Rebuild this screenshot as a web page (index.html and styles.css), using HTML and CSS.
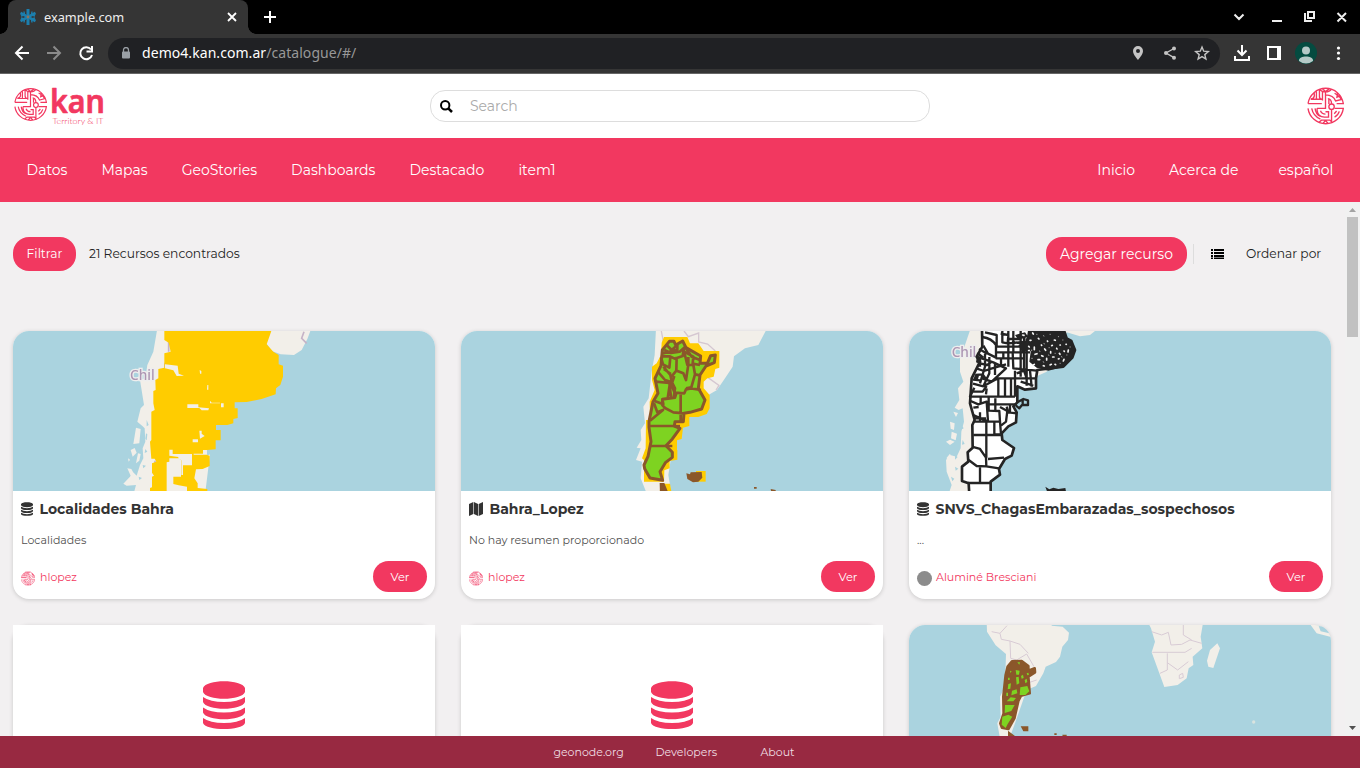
FILE: index.html
```html
<!DOCTYPE html>
<html lang="es">
<head>
<meta charset="utf-8">
<title>example.com</title>
<link rel="stylesheet" href="styles.css">
</head>
<body>
<svg class="defs" width="0" height="0">
  <symbol id="globe" viewBox="982 263 110 112">
    <g fill="none" stroke="currentColor" stroke-width="4">
      <path d="M985 312A53 53 0 0 1 1090 312H1070M985 326A53 53 0 0 0 1090 326H1064M985 312H1026M993 299H1026M994 298Q1003 297 1004 288L1003 281M1010 276V300M1019 269V291Q1019 299 1026 299M1028 276V303M1019 268Q1024 277 1037 277T1055 268M1028 268L1037 276 1048 268M1037 277V320M1037 286Q1061 287 1067 304L1087 299M1044 297Q1055 298 1055 313M1064 281Q1080 290 1083 299M1073 279L1071 293 1081 289M985 312H1025M1012 326H1037V320M1012 326V332Q1014 351 1034 352H1046V336H1037M1022 333Q1026 343 1037 343M996 326Q1000 348 1022 358M1006 326Q1008 344 1022 350M1055 328V370M1047 298V313M1064 352Q1075 346 1078 335M1063 342L1070 334M1017 368L1025 361H1050L1058 369M1030 370L1037 362 1044 370"/>
      <circle cx="1055" cy="321" r="8"/>
    </g>
  </symbol>
  <symbol id="database" viewBox="0 0 42 48">
    <path fill="currentColor" d="M0 7C3-2 39-2 42 7V11C39 20 3 20 0 11ZM0 16Q7 21 21 21T42 16V21C39 30 3 30 0 21ZM0 26.500Q7 31.500 21 31.500T42 26.500V31.500C39 40.500 3 40.500 0 31.500ZM0 37Q7 42 21 42T42 37V42C39 50 3 50 0 42Z"/>
  </symbol>
</svg>

<div class="tabstrip">
  <div class="tab">
    <svg class="favicon" viewBox="0 0 16 16"><g stroke="#1c7fae" fill="none"><path stroke-width="3" d="M8 0V16"/><path stroke-width="2.600" d="M.5 4L15.500 12M.5 12L15.500 4"/><path d="M4 2.500L4.500 6 1 7M12 2.500L11.500 6 15 7M4 13.500L4.500 10 1 9M12 13.500L11.500 10 15 9" stroke-width="1.400"/></g><circle cx="8" cy="8" r="1.400" fill="#8b745c"/></svg>
    <span class="tab-title">example.com</span>
    <svg class="tab-close" viewBox="0 0 10 10"><path d="M1 1L9 9M9 1L1 9" stroke="#fff" stroke-width="1.800"/></svg>
  </div>
  <svg class="new-tab" viewBox="0 0 12 12"><path d="M6 0V12M0 6H12" stroke="#fff" stroke-width="2"/></svg>
  <svg class="window-icons" viewBox="0 0 120 16"><g fill="none" stroke="#eee" stroke-width="2"><path d="M4.500 5.500L9 10 13.500 5.500M42 12H52M75 4V12H82M78 3H84V9H78ZM107.500 4L116 12.500M116 4L107.500 12.500"/></g></svg>
</div>

<div class="toolbar">
  <svg class="nav-icons" viewBox="0 0 94 20"><g fill="none" stroke-width="2"><path stroke="#fff" d="M29 10H16M22.500 3.500L16 10 22.500 16.500"/><path stroke="#8b8b8b" d="M47 10H60M53.500 3.500L60 10 53.500 16.500"/><path stroke="#fff" d="M91 6.500A6 6 0 1 0 92 12M92 3V8.500H86.500"/></g></svg>
  <div class="omnibox">
    <svg class="lock" viewBox="0 0 10 12"><path fill="#9aa0a6" d="M1 4.500H8Q9 4.500 9 5.500V10.500Q9 11.500 8 11.500H2Q1 11.500 1 10.500V5.500Q1 4.500 2 4.500Z"/><path fill="none" stroke="#9aa0a6" stroke-width="1.300" d="M2.500 5V3A2.500 2.500 0 0 1 7.500 3V5"/></svg>
    <span class="url">demo4.kan.com.ar<span class="url-path">/catalogue/#/</span></span>
    <svg class="omni-icons" viewBox="0 0 80 16"><path fill="#c4c4c4" fill-rule="evenodd" d="M7 1A5 5 0 0 1 12 6C12 9.500 7 15 7 15S2 9.500 2 6A5 5 0 0 1 7 1ZM7 4A2 2 0 1 0 7 8 2 2 0 1 0 7 4Z"/><g fill="#c4c4c4"><circle cx="35" cy="8" r="2"/><circle cx="43" cy="3.500" r="2"/><circle cx="43" cy="12.700" r="2"/></g><path fill="none" stroke="#c4c4c4" stroke-width="1.400" d="M43 3.500L35 8 43 12.700M71 2L72.700 6.200 77.300 6.600 73.800 9.600 74.900 14 71 11.600 67.100 14 68.200 9.600 64.700 6.600 69.300 6.200Z"/></svg>
  </div>
  <svg class="browser-icons" viewBox="0 0 120 24"><g fill="none" stroke="#fff" stroke-width="2"><path d="M20 4V14M15.500 9.500L20 14 24.500 9.500M13 15V19H27V15"/><path d="M46 6H58V18H46Z"/><path stroke-width="4" d="M57 6V18"/></g><circle cx="84" cy="12" r="11" fill="#044b40"/><circle cx="84" cy="9.500" r="4" fill="#b5c9c7"/><path fill="#b5c9c7" d="M77 20C76 14 92 14 91 20Q84 25 77 20"/><g fill="#fff"><circle cx="116.500" cy="7" r="1.600"/><circle cx="116.500" cy="12" r="1.600"/><circle cx="116.500" cy="17.500" r="1.600"/></g></svg>
</div>

<header class="brandbar">
  <svg class="logo" viewBox="0 0 92 40" role="img" aria-label="kan"><use href="#globe" x="0" y="1.500" width="33" height="34"/><text class="logo-name" x="36" y="27" textLength="55" lengthAdjust="spacingAndGlyphs">kan</text><text class="logo-tag" x="38.500" y="37.500" textLength="51" lengthAdjust="spacingAndGlyphs">Territory &amp; IT</text></svg>
  <div class="search">
    <svg class="search-icon" viewBox="0 0 13 13"><circle cx="5.200" cy="5.200" r="4.200" fill="none" stroke="#000" stroke-width="2"/><path d="M8.300 8.300L12 12" stroke="#000" stroke-width="2.500"/></svg>
    <span class="placeholder">Search</span>
  </div>
  <svg class="avatar-large"><use href="#globe"/></svg>
</header>

<nav class="menu">
  <div class="menu-left"><a>Datos</a><a>Mapas</a><a>GeoStories</a><a>Dashboards</a><a>Destacado</a><a>item1</a></div>
  <div class="menu-right"><a>Inicio</a><a>Acerca de</a><a>español</a></div>
</nav>

<main class="content">
  <section class="catalogue">
    <div class="filters">
      <span class="btn btn-filter">Filtrar</span>
      <span class="count">21 Recursos encontrados</span>
      <span class="btn btn-add">Agregar recurso</span>
      <span class="divider"></span>
      <svg class="list-icon" viewBox="0 0 13 10"><path d="M0 1H2M3 1H13M0 4H2M3 4H13M0 7H2M3 7H13M0 9.500H2M3 9.500H13" stroke="#000" stroke-width="1.800"/></svg>
      <span class="sort">Ordenar por</span>
    </div>

    <div class="grid">
      <article class="card">
        <svg class="thumb" viewBox="0 0 422 160"><g class="map" transform="translate(97 -6) scale(.33333)">
          <path fill="#f2efe9" d="M142 10H200L240 430 300 388 285 510H70L78 480 50 482 40 476 60 455 68 440 80 452 90 420 100 400 98 370 106 350 104 310 98 304 82 290 92 250 102 240 90 165 106 160 112 120 130 80ZM484 10H604L592 42 575 75 552 90 512 88 485 78 469 55ZM78 308L92 312 88 355 70 357ZM62 375l12-6 6 14-12 12ZM84 385l8 2-4 20-10 8ZM54 400l6 4-4 6ZM52 430l12 2 8 14-10 6Z"/>
          <path fill="#aad3df" d="M110 285l6 15-6 4ZM108 325l4 3-2 18-4-4ZM106 372l6 8-8 4ZM98 420l10 2-8 8ZM86 455l10 4-8 6Z"/>
          <path fill="none" stroke="#c5b3c7" stroke-width="5" d="M176 47V80M165 113V133M135 407V415M582 20L575 40 590 55"/>
          <text class="map-label" x="60" y="166">Chil</text>
          <path fill="#fc0" d="M163 10H484V18L478 35 470 58 490 80 506 90V118L519 122V155L511 180 498 190 497 208 455 222 410 231 374 232V250H383V279L370 282V295L352 300H318V315H332V346H317V373L291 375V390L299 392V423L278 432 258 433 253 460 263 475V489L292 492V510H231V485L206 481 190 477V455H213V405L205 400H178V410L170 412V510H120V489L126 487V455L132 452 126 443V415L139 410 134 401H124L120 350 124 345V260L134 255 130 235V198L137 195 136 165 145 160V132L163 128V85L182 80 176 53 163 45Z"/>
          <path fill="#f2efe9" d="M165 118L203 122 206 146 222 152 200 153 190 136 165 130ZM232 238H265V247L297 250 295 256H275L268 249H232ZM300 227L305 233H330V235H300ZM333 235H341V247H333ZM268 317H275V326L284 333 270 341ZM248 343H264V352H248ZM178 374H188V387H246V421H219V450H214V406L205 401V396L178 392ZM171 455H188V480L205 485 231 490V510H171ZM269 135l5 3v8h-4ZM292 180h3v14h-4ZM279 375h12v14h-40v-3h28Z"/>
        </g></svg>
        <div class="card-body">
          <h2 class="card-title"><svg class="title-icon"><use href="#database"/></svg><span>Localidades Bahra</span></h2>
          <p class="desc">Localidades</p>
          <div class="card-foot"><span class="user"><svg class="avatar"><use href="#globe"/></svg>hlopez</span><span class="btn btn-view">Ver</span></div>
        </div>
      </article>

      <article class="card">
        <svg class="thumb" viewBox="0 0 422 160"><g class="map" transform="translate(149 -6) scale(.33333)">
          <path fill="#f2efe9" d="M138 10H470L467 18 445 60 405 70 372 94 368 125 345 160 321 195 290 213 200 290 175 450 185 510H112L92 460 96 410 78 405 92 370 80 368 94 345 92 315 105 295 100 245 116 220 125 140 134 90Z"/>
          <path fill="none" stroke="#d5c7d1" stroke-width="4" d="M154 18L160 50M222 18L235 35 266 24V51L293 57 316 78M290 155L327 181L318 195"/>
          <path fill="#fc0" d="M162 36H232L240 55 265 55 281 78H328V128L316 132 311 155 292 160 281 170V190L299 210V250L290 267 265 276H238V303L219 308 215 342 201 346V375H202V404L179 408V430L163 436 162 470H102V405L96 400 107 370 108 285H120L119 230 134 195 126 165V125L140 115 153 90 155 53ZM151 476H180L186 510H149Z"/>
          <path fill="#7ed321" stroke="#8b572a" stroke-width="9" stroke-linejoin="round" d="M178 49H192L197 60 218 48 228 68 272 93 270 115 292 115 302 92 316 90 313 113 288 123 270 150 265 190 285 225 275 252 240 262 222 265 220 290H195L193 303 210 310 187 342 168 362 187 382V397L167 412 150 440 158 466 120 459 104 431 102 420 114 394 123 350 117 307V290L129 230 144 205 135 160 153 122 157 75Z"/>
          <path fill="none" stroke="#8b572a" stroke-width="8" stroke-linejoin="round" d="M170 60L185 75 202 60V74L183 79 159 85M157 94H180L194 101 218 93 222 68M228 70L245 95 270 105M222 80L250 95 248 116 270 120M153 97L159 118 178 128 181 96M200 95L199 137L185 154M200 137L220 145 228 165 235 119V96M222 78L232 120H250L255 148 270 151M255 148L244 187 228 190M160 125L181 150 186 172 165 165 146 143M137 170L178 174L183 216M186 172L195 190 191 220M180 174L173 220 157 222 160 238 134 228M193 153L184 180 194 203 223 205 228 193 243 190 273 195M212 204V290M158 223L195 218 199 205M157 222V240L165 249 190 262 223 265M132 235L142 262 159 255 120 287M117 303H210M121 363H187M161 132L183 147M163 75L183 84 209 80 225 66"/>
          <path fill="#fc0" d="M258 438H287V470H258Z"/><path fill="#8b572a" d="M229 445L240 448 242 442 275 441 277 458 265 470 249 472 232 462ZM149 474H163L178 510H150ZM432 486h8v5h-8ZM482 492l15 3v12h-12Z"/>
        </g></svg>
        <div class="card-body">
          <h2 class="card-title"><svg class="title-icon map-icon" viewBox="0 0 14 14"><path fill="currentColor" d="M0 2L4.300 0V12L0 14ZM4.900 0L9.100 2V14L4.900 12ZM9.700 2L14 0V12L9.700 14Z"/></svg><span>Bahra_Lopez</span></h2>
          <p class="desc">No hay resumen proporcionado</p>
          <div class="card-foot"><span class="user"><svg class="avatar"><use href="#globe"/></svg>hlopez</span><span class="btn btn-view">Ver</span></div>
        </div>
      </article>

      <article class="card">
        <svg class="thumb" viewBox="0 0 422 160"><g class="map" transform="translate(-9 -6) scale(.33333)">
          <path fill="#f2efe9" d="M212 10H590L585 18 570 30 540 34 500 22 440 140 330 190 250 510H145L155 480 140 440 138 405 150 390 170 395 182 370 184 320 192 290 188 250 176 255 164 248 178 225 174 190 190 170 180 140 180 100 195 60ZM150 290l14 5-2 20-10-4ZM155 320l16 6-4 20-14-6ZM138 350l12-6 14 6-14 10ZM160 260l14 4-6 12ZM140 398l10-12 8 20-16 4Z"/>
          <path fill="#aad3df" d="M165 390l8 6-8 8ZM185 300l6 10-8 4ZM153 455l10 6-6 8ZM165 425l10 6-8 6ZM188 345l6 12-8 2Z"/>
          <text class="map-label" x="155" y="96">Chil</text>
          <path fill="#fff" stroke="#242424" stroke-width="8" stroke-linejoin="round" d="M246 10H490L500 40 514 48 525 75 517 98 490 125 412 135 408 160V190L375 194 352 184V215L352 232 340 244 350 262 348 292 325 304 305 325 307 345 342 369 335 392 315 402 297 432 300 449 272 470V510H208L206 475 186 468V425L205 410 203 382 218 368 217 300 224 285 210 235 215 160 240 110 230 95 247 65Z"/>
          <path fill="none" stroke="#242424" stroke-width="7" stroke-linejoin="round" d="M247 36Q275 40 288 60V98L264 86 250 62M255 22L290 30V62M307 10V52L323 55 325 30 302 26M325 18V125M340 10V82M288 65H390M289 82H390M287 100H370M310 80V100M303 100V125M338 82L340 130 410 137M362 10V155M372 30V130M380 40V182M325 42H360M325 55L380 50M230 95L280 112 318 130 275 170 247 160M237 72L262 86M232 84L250 98M240 115L262 120 275 110M229 130L252 138 276 130 318 118M226 150L248 148 260 165M219 164L240 166M219 176L250 184 294 160H408M345 137V215M255 86V125L240 175M268 96V145L250 184M240 100V125M285 112V150M223 188L210 215H345M217 200H248L260 183M295 158V215M315 162V213M333 162V215M258 208L260 190M362 170L400 182M390 137L395 185M350 145L372 137 380 160M212 228L235 238 260 230 264 290 220 270M242 218V238M220 248L236 246M266 218V257L298 258 300 290H220M286 220V256M268 238H350M300 246L322 258 318 290 300 304M320 245L325 262 350 265M330 238V262M283 292V328H303M220 330H303M259 290V398M300 290L303 328M218 366L240 372 258 398 259 424 230 423 206 405M264 402L312 398M259 424L297 430M240 425V475M204 474H270M240 262V290M220 280H258M352 232l18-10 14 4v14h-18l-8 10-10-8M368 224v12"/>
          <path fill="#242424" d="M385 10H490L500 38 514 48 525 75 517 98 490 125 445 137 410 128 388 110 392 80 378 55ZM355 60l24-10 18 20-30 12ZM345 30l30-8 10 14-30 8ZM230 98l12 4-4 14-10-4ZM225 148l12 4-4 14-12-4Z"/>
          <path fill="none" stroke="#f4f4f4" stroke-width="5" stroke-linecap="round" d="M368 30l4 1M398 24l2 3M390 46h3M403 66v8M386 64l2 2M415 40l2 2M405 88l6-2M414 104h5M400 120l3-2M434 72l3 4M442 48l1 1M463 45l3 1M425 92l4 2M452 80v4M470 70l1 2M440 100v5M458 96h4M478 85l2 3M492 78l1 1M475 102l2-1M450 120l4-2M430 122l3 1M492 103l-2 5M505 75l-1 6M498 58h1M465 118l2 1M424 60l1 1M455 62l2-1M480 60h1"/>
          <path fill="none" stroke="#bbb" stroke-width="2.500" stroke-linecap="round" d="M410 28h1M430 32l2 1M450 28h1M475 35h1M432 55l1 2M447 68h1M418 78l2 1M445 90l2 1M465 85h1M484 95l2 1M500 90h1M430 110l1 2M480 115h1M510 66h1M488 45h1M395 75v2M395 100h2"/>
          <path fill="#242424" d="M436 485L448 493 460 488 475 492 496 489 500 510H445Z"/>
        </g></svg>
        <div class="card-body">
          <h2 class="card-title"><svg class="title-icon"><use href="#database"/></svg><span>SNVS_ChagasEmbarazadas_sospechosos</span></h2>
          <p class="desc">...</p>
          <div class="card-foot"><span class="user"><i class="gray-avatar"></i>Aluminé Bresciani</span><span class="btn btn-view">Ver</span></div>
        </div>
      </article>

      <article class="card square"><div class="placeholder-thumb"><svg class="big-database"><use href="#database"/></svg></div></article>
      <article class="card square"><div class="placeholder-thumb"><svg class="big-database"><use href="#database"/></svg></div></article>
      <article class="card">
        <svg class="thumb" viewBox="0 0 422 160"><g class="map" transform="translate(-9 -135) scale(.33333)">
          <path fill="#f2efe9" d="M260 395H455V407L488 410 507 428 504 450 487 470 480 500 468 516 437 530 430 550 408 588 380 600 345 700 330 740H299L292 700 302 680 300 620 315 590 318 492 287 466 261 425ZM743 395H908V405L902 440 907 475 878 500 880 525 866 535 860 565 833 585 793 591 778 550 755 487 765 455 753 415ZM952 460L960 475 940 534 925 530 921 512 930 480ZM1228 400L1260 406 1293 435V441L1250 430Z"/>
          <path fill="#aad3df" d="M1256 408L1278 412 1288 430 1262 424Z"/>
          <path fill="none" stroke="#d8cbd5" stroke-width="3" d="M275 425L300 430 321 407M300 430L304 448 330 453 332 505 350 510 380 492 402 530M330 453L360 463 385 490M380 580L410 570M755 425L785 435 805 427 813 465 845 463 870 450 905 460M757 487H855L875 475M802 490V540L780 550M802 518L833 540 865 515M850 405V435L875 450M838 555l10-5 2 12-12 4Z"/>
          <path fill="#8b572a" stroke="#8b572a" stroke-width="8" stroke-linejoin="round" d="M336 514L365 513 385 528V542L404 535 405 547 385 560 389 610 363 617 355 633 343 685 325 717 306 713 301 700 311 670 310 620 317 555 323 530Z"/>
          <path fill="#7ed321" d="M361 592L382 588 388 604 376 615H359ZM347 540l12 2-2 12h-8ZM348 562l8-2 2 20-8 4ZM325 582l8-2-2 16-8 2ZM336 602l14-4 2 12-18 6ZM320 634l12-12 16 2-8 10ZM315 645h29l-10 18-20 6ZM307 680l18-6 12 6-14 22-6 12-12-10ZM319 608h5v10h-5ZM363 558l6-4 2 10-6 2ZM380 550l5-2 2 6-5 2ZM330 542l5 2-4 5ZM352 517h8l-2 7ZM374 570l6-4 2 10-6 4ZM324 563h5v7h-5Z"/>
          <path fill="#8b572a" d="M362 709H385V724H370ZM324 722L345 738H324ZM463 730h7v5h-7ZM487 734h13v5h-12Z"/><circle cx="1061" cy="696" r="5" fill="#d9e3df"/>
        </g></svg>
      </article>
    </div>
  </section>
  <div class="scrollbar">
    <svg class="arrow" viewBox="0 0 15 15"><path d="M4 10L7.500 6 11 10Z" fill="#a3a3a3"/></svg>
    <div class="scroll-thumb"></div>
    <svg class="arrow" viewBox="0 0 15 15"><path d="M4 5H11L7.500 9Z" fill="#505050"/></svg>
  </div>
</main>

<footer class="footer"><a class="geonode">geonode.org</a><a class="developers">Developers</a><a>About</a></footer>
</body>
</html>
```
FILE: styles.css
```css
* { box-sizing: border-box; }
body { margin: 0; width: 1360px; height: 768px; overflow: hidden; display: flex; flex-direction: column; font-family: Montserrat, Inter, "Open Sans", sans-serif; background: #f2f0f1; color: #212121; }
svg { display: block; flex: none; }
.defs { position: absolute; }

.tabstrip { height: 34px; flex: none; background: #000; display: flex; align-items: center; padding-left: 8px; }
.tab { width: 240px; height: 34px; background: #353535; border-radius: 8px 8px 0 0; display: flex; align-items: center; padding: 0 11px 0 12px; position: relative; }
.tab::before, .tab::after { content: ""; position: absolute; bottom: 0; width: 8px; height: 8px; }
.tab::before { left: -8px; background: radial-gradient(circle at 0 0, #000 7.500px, #353535 8px); }
.tab::after { right: -8px; background: radial-gradient(circle at 100% 0, #000 7.500px, #353535 8px); }
.favicon { width: 16px; height: 16px; }
.tab-title { margin-left: 8px; flex: 1; font: 12.750px "Noto Sans", sans-serif; color: #eee; }
.tab-close { width: 10px; height: 10px; }
.new-tab { width: 12px; height: 12px; margin-left: 16px; }
.window-icons { width: 120px; height: 16px; margin-left: auto; margin-right: 10px; }
.toolbar { height: 40px; flex: none; background: #353535; border-bottom: 1px solid #666; display: flex; align-items: center; padding: 0 18px 1px 0; }
.nav-icons { width: 94px; height: 20px; }
.omnibox { width: 1112px; height: 31px; margin-left: 14px; background: #202124; border-radius: 16px; display: flex; align-items: center; padding: 0 9px 0 13px; }
.lock { width: 10px; height: 12px; }
.url { margin: 0 0 2px 11px; flex: 1; font: 14px "Noto Sans", sans-serif; letter-spacing: .06px; color: #fff; }
.url-path { color: #989898; }
.omni-icons { width: 80px; height: 16px; }
.browser-icons { width: 120px; height: 24px; margin-left: 2px; }

.brandbar { height: 64px; flex: none; background: #fff; display: flex; align-items: center; padding: 0 16px 0 14px; color: #f23860; }
.logo { width: 92px; height: 40px; overflow: visible; }
.logo-name { font: 600 33px "Noto Sans", sans-serif; fill: #f23860; stroke: #f23860; stroke-width: .7px; stroke-linejoin: round; }
.logo-tag { font: 300 8px Lato, sans-serif; fill: #f23860; }
.search { width: 500px; height: 32px; margin-left: 324px; border: 1px solid #ddd; border-radius: 15px; display: flex; align-items: center; padding-left: 9px; }
.search-icon { width: 13px; height: 13px; }
.placeholder { margin-left: 17px; font-size: 14px; color: #aaa; }
.avatar-large { width: 37px; height: 38px; margin-left: auto; }
.menu { height: 64px; flex: none; background: #f23860; color: #fff; display: flex; justify-content: space-between; align-items: center; padding: 0 26.600px 0 26.600px; font-size: 14px; }
.menu-left, .menu-right { display: flex; gap: 34px; }
.menu-right a:last-child { margin-left: 6px; }

.content { height: 534px; flex: none; display: flex; }
.catalogue { width: 1345px; overflow: hidden; padding: 35px 14px 0 13px; }
.filters { display: flex; align-items: center; height: 34px; margin-bottom: 60px; font-size: 12.250px; white-space: nowrap; }
.btn { background: #f23860; color: #fff; border-radius: 16px; display: flex; align-items: center; justify-content: center; }
.btn-filter { width: 63px; height: 34px; padding-bottom: 2px; font-size: 12.250px; }
.count { margin: 0 0 1px 13px; }
.btn-add { width: 141px; height: 34px; margin-left: auto; font-size: 14px; }
.divider { width: 1px; height: 20px; margin: 0 17px 0 6px; background: #ddd; }
.list-icon { width: 13px; height: 10px; margin-bottom: 1px; }
.sort { width: 75px; margin: 0 10px 1px 22px; }
.grid { display: grid; grid-template-columns: repeat(3, 422px); grid-auto-rows: 268px; gap: 26px; }
.card { background: #fff; border-radius: 16px; box-shadow: 0 1px 4px rgba(0, 0, 0, .17); overflow: hidden; }
.card.square { overflow: visible; }
.thumb { width: 422px; height: 160px; background: #aad3df; }
.map { filter: blur(1.400px); }
.map-label { font: 500 41px "Noto Sans", sans-serif; fill: #ad96b3; stroke: #eee; stroke-width: 8px; paint-order: stroke; }
.card-body { padding: 0 8px; }
.card-title { margin: 0; height: 37px; padding-bottom: 1px; display: flex; align-items: center; color: #333; font-size: 14px; font-weight: 700; white-space: nowrap; }
.card-title span { margin-bottom: 1px; }
.title-icon { width: 12px; height: 14px; margin-right: 6.500px; }
.map-icon { width: 14px; }
.desc { margin: 0; height: 24px; line-height: 24px; font-size: 11px; color: #505050; }
.card-foot { margin-top: 9px; height: 31px; display: flex; align-items: center; justify-content: space-between; }
.user { display: flex; align-items: center; gap: 5px; color: #f23860; font-size: 11px; }
.avatar { width: 14px; height: 15px; margin-top: 3px; }
.gray-avatar { width: 15px; height: 15px; border-radius: 50%; background: #8c8c8c; margin: 3px -1px 0 0; }
.btn-view { width: 54px; height: 31px; font-size: 11.500px; }
.placeholder-thumb { height: 160px; background: #fff; color: #f23860; display: flex; align-items: center; justify-content: center; }
.big-database { width: 42px; height: 48px; }
.scrollbar { width: 15px; background: #f1f1f1; display: flex; flex-direction: column; align-items: center; }
.arrow { width: 15px; height: 15px; }
.scroll-thumb { width: 11px; height: 120px; background: #c1c1c1; margin-bottom: auto; }
.footer { height: 32px; flex: none; background: #982941; color: #f0dfe3; display: flex; align-items: center; padding-left: 553.400px; font-size: 11px; }
.geonode { width: 102px; }
.developers { width: 105px; }
```
